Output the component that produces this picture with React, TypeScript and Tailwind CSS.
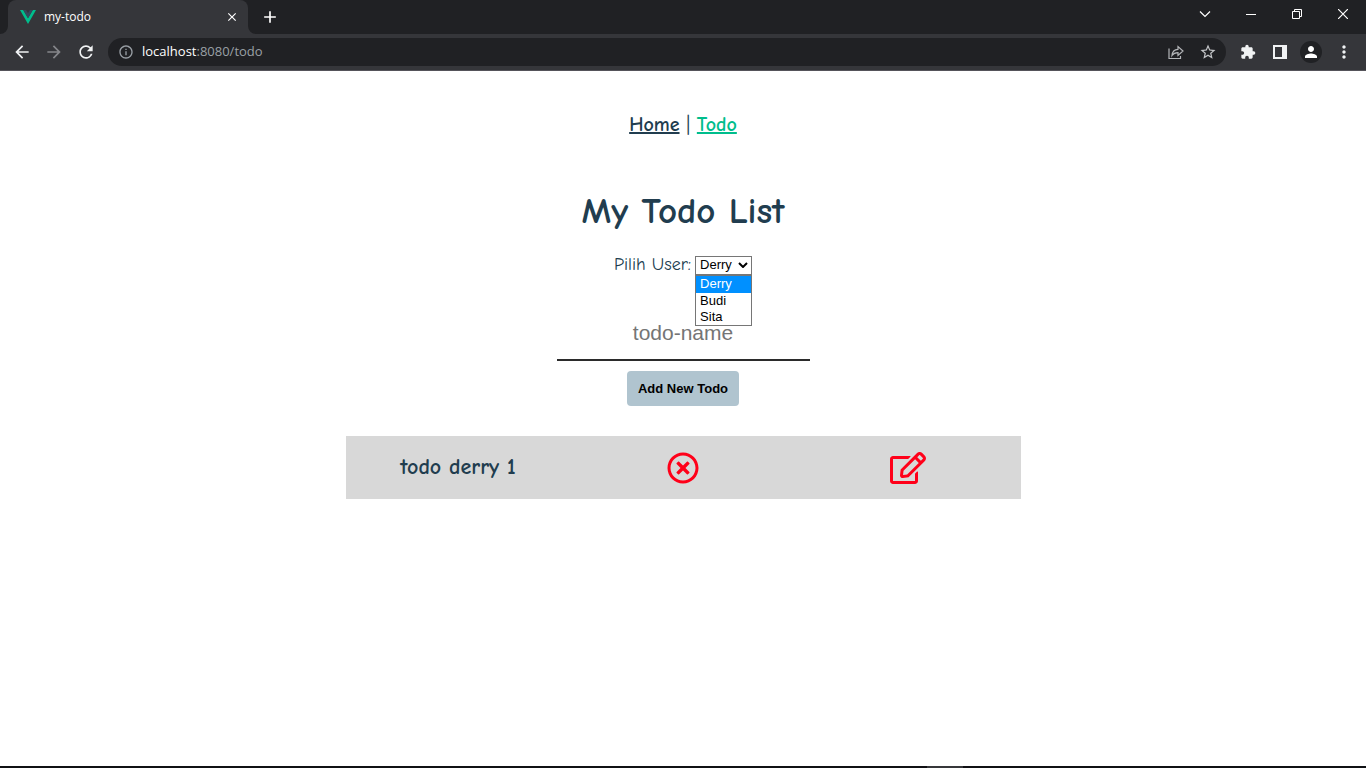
import { useState } from "react";
import type { ReactNode } from "react";
import { FaRegTimesCircle, FaRegEdit } from "react-icons/fa";
import {
  MdArrowBack,
  MdArrowForward,
  MdRefresh,
  MdInfoOutline,
  MdStarOutline,
  MdExtension,
  MdPerson,
  MdMoreVert,
  MdClose,
  MdAdd,
} from "react-icons/md";

const users = ["Derry", "Budi", "Sita"];

function IconButton({ label, className, children }: { label: string; className: string; children: ReactNode }) {
  return (
    <button type="button" aria-label={label} className={`flex shrink-0 items-center justify-center ${className}`}>
      {children}
    </button>
  );
}

function VueLogo() {
  return (
    <svg viewBox="0 0 16 14" className="h-3.5 w-4" aria-hidden="true">
      <path d="M0 0h3.2L8 8.3 12.8 0H16L8 14z" fill="#00bd8c" />
      <path d="M3.2 0h2.9L8 3.3 9.9 0h2.9L8 8.3z" fill="#35495e" />
    </svg>
  );
}

function TabBar() {
  return (
    <div className="flex h-[34px] bg-[#202124] pl-2 text-white">
      <div className="relative flex w-60 items-center rounded-t-lg bg-[#35363a] pr-2 pl-3">
        <svg viewBox="0 0 8 8" className="absolute bottom-0 -left-2 size-2" aria-hidden="true">
          <path d="M8 0v8H0a8 8 0 0 0 8-8z" fill="#35363a" />
        </svg>
        <svg viewBox="0 0 8 8" className="absolute -right-2 bottom-0 size-2" aria-hidden="true">
          <path d="M0 0v8h8a8 8 0 0 1-8-8z" fill="#35363a" />
        </svg>
        <VueLogo />
        <span className="ml-2 flex-1 text-xs">my-todo</span>
        <IconButton label="Close tab" className="size-4">
          <MdClose className="size-3.5" stroke="currentColor" />
        </IconButton>
      </div>
      <IconButton label="New tab" className="ml-3 w-5">
        <MdAdd className="size-5" />
      </IconButton>
      <div className="ml-auto flex h-7">
        <IconButton label="Search tabs" className="w-[46px]">
          <svg viewBox="0 0 12 12" className="size-3" fill="none" stroke="white" strokeWidth="1.2">
            <path d="M1 3.5l5 5 5-5" />
          </svg>
        </IconButton>
        <IconButton label="Minimize" className="w-[46px]">
          <svg viewBox="0 0 10 10" className="size-2.5" stroke="white">
            <path d="M0 5.5h10" />
          </svg>
        </IconButton>
        <IconButton label="Restore" className="w-[46px]">
          <svg viewBox="0 0 10 10" className="size-2.5" fill="none" stroke="white">
            <path d="M.5 2.5h7v7h-7zM2.5 2.5v-2h7v7h-2" />
          </svg>
        </IconButton>
        <IconButton label="Close window" className="w-[46px]">
          <svg viewBox="0 0 10 10" className="size-2.5" fill="none" stroke="white" strokeWidth="1.2">
            <path d="M0 0l10 10M10 0L0 10" />
          </svg>
        </IconButton>
      </div>
    </div>
  );
}

function Toolbar() {
  return (
    <div className="flex h-[37px] items-center border-b border-[#55545a] bg-[#35363a] pr-3 text-[#f1f3f4]">
      <IconButton label="Back" className="ml-3 size-5">
        <MdArrowBack className="size-5" />
      </IconButton>
      <IconButton label="Forward" className="ml-3 size-5 text-[#85868a]">
        <MdArrowForward className="size-5" />
      </IconButton>
      <IconButton label="Reload" className="ml-3 size-5">
        <MdRefresh className="size-5" />
      </IconButton>
      <div className="ml-3 flex h-7 flex-1 items-center rounded-full bg-[#202124] pr-2 pl-2.5 text-[#9aa0a6]">
        <MdInfoOutline className="size-4" />
        <span className="ml-2 flex-1 text-[13px]">
          <span className="text-white">localhost</span>:8080/todo
        </span>
        <IconButton label="Share" className="size-5">
          <svg viewBox="0 0 16 16" className="size-4" fill="none" stroke="#b4b6b9" strokeWidth="1.2">
            <path d="M1 4.5v10h11.5V12M4 11.5c.3-4 2.3-6 6-6.200V2.500L15 7l-5 4.500V8.700c-2.800 0-4.600.8-6 2.800z" />
          </svg>
        </IconButton>
        <IconButton label="Bookmark" className="ml-3 size-5 text-[#c4c6c9]">
          <MdStarOutline className="size-[18px]" />
        </IconButton>
      </div>
      <IconButton label="Extensions" className="ml-3 size-5">
        <MdExtension className="size-4" />
      </IconButton>
      <IconButton label="Side panel" className="ml-3 size-5">
        <svg viewBox="0 0 14 14" className="size-3.5">
          <path fill="currentColor" fillRule="evenodd" d="M0 0h14v14H0zM2 2v10h7V2z" />
        </svg>
      </IconButton>
      <IconButton label="Profile" className="ml-2.5 size-[22px] rounded-full bg-[#202124] text-white">
        <MdPerson className="size-[18px]" />
      </IconButton>
      <IconButton label="Menu" className="ml-3 size-5">
        <MdMoreVert className="size-5" />
      </IconButton>
    </div>
  );
}

function UserPicker() {
  const [user, setUser] = useState(users[0]);
  return (
    <div className="mt-5 flex h-5 items-center justify-center gap-1">
      <label htmlFor="user" className="text-lg">
        Pilih User:
      </label>
      <div className="relative font-['Liberation_Sans',Arial,sans-serif] text-[13px] leading-4 text-black">
        <select
          id="user"
          value={user}
          onChange={(event) => setUser(event.target.value)}
          className="block h-[19px] w-[57px] appearance-none border border-[#767676] bg-white pl-1 leading-4"
        >
          {users.map((name) => (
            <option key={name}>{name}</option>
          ))}
        </select>
        <svg
          viewBox="0 0 10 6"
          className="pointer-events-none absolute top-1.5 right-1 h-1.5 w-2.5"
          fill="none"
          stroke="black"
          strokeWidth="2"
        >
          <path d="M1 1l4 4 4-4" />
        </svg>
        <ul role="listbox" aria-label="Users" className="absolute top-full left-0 z-10 w-full border border-[#767676] bg-white text-left">
          {users.map((name) => (
            <li
              key={name}
              role="option"
              aria-selected={name === user}
              onClick={() => setUser(name)}
              className="pl-1 aria-selected:bg-[#0090ff] aria-selected:pb-px aria-selected:text-white"
            >
              {name}
            </li>
          ))}
        </ul>
      </div>
    </div>
  );
}

export default function App() {
  return (
    <div className="flex min-h-screen flex-col bg-white font-['Open_Sans','Noto_Sans',sans-serif]">
      <header>
        <TabBar />
        <Toolbar />
      </header>
      <main className="flex-1 text-center font-['Comic_Sans_MS','Comic_Neue','Noto_Sans',sans-serif] text-[#213d4f]">
        <nav className="pt-10 text-xl leading-7">
          <a href="#home" className="font-bold underline">
            Home
          </a>
          {" | "}
          <a href="#todo" className="font-bold text-[#00bd8c] underline">
            Todo
          </a>
        </nav>
        <h1 className="mt-12 text-[37px] leading-12 font-bold">My Todo List</h1>
        <UserPicker />
        <form className="mt-8 flex flex-col items-center" onSubmit={(event) => event.preventDefault()}>
          <input
            type="text"
            aria-label="Todo name"
            placeholder="todo-name"
            className="h-[54px] w-[253px] border-b-2 border-[#2b2b2b] text-center font-['Liberation_Sans',Arial,sans-serif] text-[21px] outline-none placeholder:text-[#757575]"
          />
          <button
            type="submit"
            className="mt-2.5 h-[35px] rounded-[4px] bg-[#b0c4cf] px-[11px] font-['Liberation_Sans',Arial,sans-serif] text-[13px] font-bold text-black"
          >
            Add New Todo
          </button>
        </form>
        <ul className="mx-auto mt-[30px] w-[675px] max-w-full">
          <li className="grid h-[63px] grid-cols-3 items-center bg-[#d8d8d8]">
            <span className="text-[22px] font-bold">todo derry 1</span>
            <button type="button" aria-label="Delete todo" className="justify-self-center text-[#ff0019]">
              <FaRegTimesCircle className="size-8" />
            </button>
            <button type="button" aria-label="Edit todo" className="justify-self-center text-[#ff0019]">
              <FaRegEdit className="h-8 w-9" />
            </button>
          </li>
        </ul>
      </main>
      <footer className="flex h-0.5 justify-end bg-[#101114]">
        <div className="mr-[403px] w-9 bg-[#36373a]" />
      </footer>
    </div>
  );
}
